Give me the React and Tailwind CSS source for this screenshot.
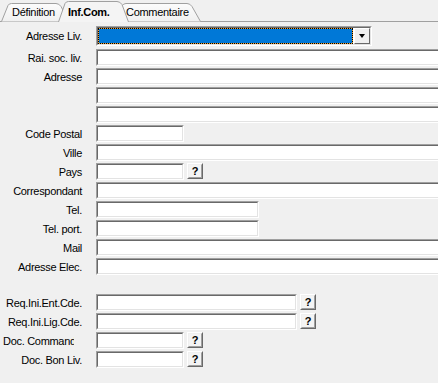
import React from "react"

// champ creux façon Windows classique
function Sunken({ className, children }) {
  return (
    <div className={"shrink-0 border border-t-[#a0a0a0] border-l-[#a0a0a0] border-b-white border-r-white " + className}>
      <div className="h-full border border-t-[#696969] border-l-[#696969] border-b-[#e3e3e3] border-r-[#e3e3e3] bg-white">
        {children}
      </div>
    </div>
  )
}

function HelpButton() {
  return (
    <div className="ml-[3px] h-[16px] w-[16px] shrink-0 self-start border border-t-white border-l-white border-b-[#696969] border-r-[#696969] bg-[#f0f0f0]">
      <div className="flex h-full w-full items-center justify-center border border-t-[#f0f0f0] border-l-[#f0f0f0] border-b-[#a0a0a0] border-r-[#a0a0a0] bg-[#f4f4f4] text-[11px] font-bold leading-none">
        ?
      </div>
    </div>
  )
}

function Label({ children }) {
  return <div className="mr-[14px] w-[82px] shrink-0 whitespace-nowrap text-right leading-[14px]">{children}</div>
}

function Row({ label, width, help }) {
  return (
    <div className="flex h-[17px] items-center">
      <Label>{label}</Label>
      <Sunken className={"h-[17px] " + width} />
      {help && <HelpButton />}
    </div>
  )
}

export default function App() {
  return (
    <div className="relative h-[383px] w-[438px] overflow-hidden bg-[#f0f0f0] font-['Liberation_Sans',Arial,sans-serif] text-[11px] tracking-[-0.3px] text-black">
      {/* Onglets */}
      <div className="relative h-[22px]">
        <svg className="absolute inset-0" width="438" height="22">
          <defs>
            <linearGradient id="tab" x1="0" y1="0" x2="0" y2="1">
              <stop offset="0" stopColor="#fcfcfc" />
              <stop offset="1" stopColor="#f0f0f0" />
            </linearGradient>
          </defs>
          <path d="M0,21.5 H58.5 M128.5,21.5 H438" stroke="#a0a0a0" fill="none" />
          <path d="M116,21.5 L122,6 Q123.5,3.5 126,3.5 L187,3.5 Q190,3.5 192,6.5 L200.5,21.5" fill="url(#tab)" stroke="#a0a0a0" />
          <path d="M1.5,21.5 L8,5.5 Q9,3.5 11.5,3.5 L56,3.5 Q59,3.5 61,6.5 L69,21.5" fill="url(#tab)" stroke="#a0a0a0" />
          <path d="M58.5,22 L65,3.5 Q66,1.5 68.5,1.5 L117,1.5 Q120,1.5 122,4.5 L128.5,22" fill="#f4f4f4" stroke="#a0a0a0" />
        </svg>
        <span className="absolute left-[12px] top-[5px] leading-[14px]">Définition</span>
        <span className="absolute left-[68px] top-[5px] font-bold leading-[14px]">Inf.Com.</span>
        <span className="absolute left-[126px] top-[5px] leading-[14px]">Commentaire</span>
      </div>

      <div className="flex flex-col pt-[4px]">
        <div className="flex h-[20px] items-center">
          <Label>Adresse Liv.</Label>
          <Sunken className="h-[20px] w-[276px]">
            <div className="flex h-full gap-[1px]">
              <div className="flex-1 border border-dotted border-black bg-[#f0a030]">
                <div className="h-full bg-[#0078d7]" />
              </div>
              <div className="flex w-[16px] items-center justify-center border border-t-white border-l-white border-b-[#696969] border-r-[#696969] bg-[#f0f0f0]">
                <div className="h-0 w-0 border-x-[3.5px] border-t-[4px] border-x-transparent border-t-black" />
              </div>
            </div>
          </Sunken>
        </div>

        <div className="mt-[3px] flex flex-col gap-[2px]">
          <Row label="Rai. soc. liv." width="w-[360px]" />
          <Row label="Adresse" width="w-[360px]" />
          <Row label="" width="w-[360px]" />
          <Row label="" width="w-[360px]" />
          <Row label="Code Postal" width="w-[88px]" />
          <Row label="Ville" width="w-[360px]" />
          <Row label="Pays" width="w-[88px]" help />
          <Row label="Correspondant" width="w-[360px]" />
          <Row label="Tel." width="w-[163px]" />
          <Row label="Tel. port." width="w-[163px]" />
          <Row label="Mail" width="w-[360px]" />
          <Row label="Adresse Elec." width="w-[360px]" />
        </div>

        <div className="mt-[19px] flex flex-col gap-[2px]">
          <Row label="Req.Ini.Ent.Cde." width="w-[201px]" help />
          <Row label="Req.Ini.Lig.Cde." width="w-[201px]" help />
          <div className="flex h-[17px] items-center">
            <div className="mr-[14px] w-[82px] shrink-0 leading-[14px]">
              <div className="ml-[3px] w-[71px] overflow-hidden whitespace-nowrap">Doc. Commande</div>
            </div>
            <Sunken className="h-[17px] w-[88px]" />
            <HelpButton />
          </div>
          <Row label="Doc. Bon Liv." width="w-[88px]" help />
        </div>
      </div>
    </div>
  )
}
